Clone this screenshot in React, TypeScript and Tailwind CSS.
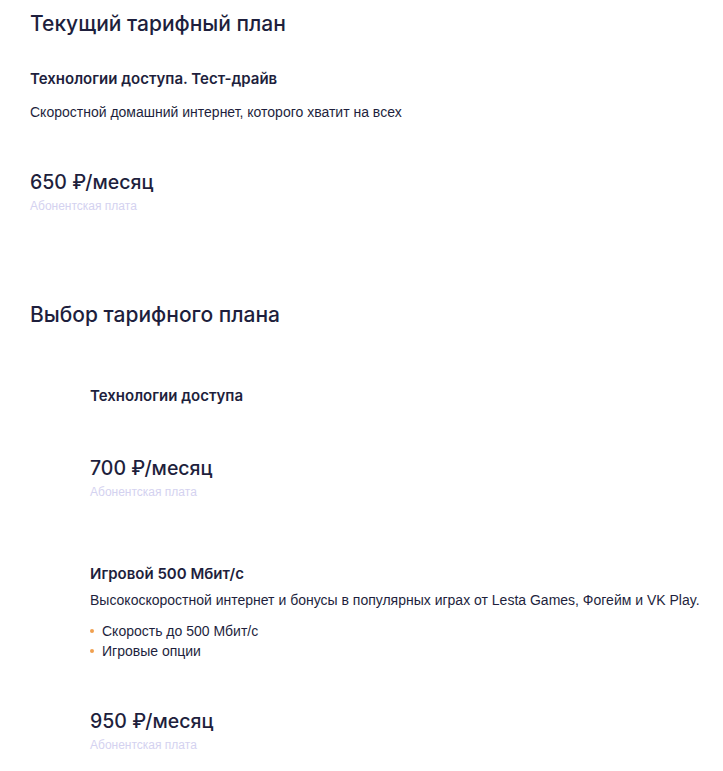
const PLANS = [
  {
    name: 'Технологии доступа',
    price: 700,
  },
  {
    name: 'Игровой 500 Мбит/с',
    description: 'Высокоскоростной интернет и бонусы в популярных играх от Lesta Games, Фогейм и VK Play.',
    features: ['Скорость до 500 Мбит/с', 'Игровые опции'],
    price: 950,
  },
]

const heading = "font-['Inter',sans-serif] text-[#1e1f3d]"
const body = "font-['Liberation_Sans',Arial,sans-serif] text-[#1e1f3d]"

function Price({ value }: { value: number }) {
  return (
    <div>
      <p className={`${heading} text-[19.5px] font-medium leading-6`}>{value} ₽/месяц</p>
      <p className={`${body} text-[12px] leading-4 mt-[4px] !text-[#d4d2f0]`}>Абонентская плата</p>
    </div>
  )
}

export default function App() {
  return (
    <div className="bg-white min-h-screen pl-[30px] pr-[8px] pt-[10px] pb-4">
      <section>
        <h1 className={`${heading} text-[21px] font-medium leading-7`}>Текущий тарифный план</h1>
        <h3 className={`${heading} text-[15px] font-semibold leading-5 mt-[31px]`}>Технологии доступа. Тест-драйв</h3>
        <p className={`${body} text-[14px] leading-5 mt-[13px]`}>Скоростной домашний интернет, которого хватит на всех</p>
        <div className="mt-[48px]">
          <Price value={650} />
        </div>
      </section>

      <section className="mt-[87px]">
        <h2 className={`${heading} text-[21px] font-medium leading-7`}>Выбор тарифного плана</h2>
        <div className="pl-[60px]">
          {PLANS.map((plan, i) => (
            <div key={plan.name} className={i === 0 ? 'mt-[57px]' : 'mt-[64px]'}>
              <h3 className={`${heading} text-[15px] font-semibold leading-5`}>{plan.name}</h3>
              {plan.description && (
                <p className={`${body} text-[14px] leading-5 mt-[6px]`}>{plan.description}</p>
              )}
              {plan.features && (
                <ul className="mt-[11px] flex flex-col">
                  {plan.features.map(f => (
                    <li key={f} className={`${body} text-[14px] leading-5 flex items-center gap-2`}>
                      <span className="w-[4px] h-[4px] rounded-full bg-[#f0a050]" />
                      {f}
                    </li>
                  ))}
                </ul>
              )}
              <div className={plan.features ? 'mt-[48px]' : 'mt-[50px]'}>
                <Price value={plan.price} />
              </div>
            </div>
          ))}
        </div>
      </section>
    </div>
  )
}
